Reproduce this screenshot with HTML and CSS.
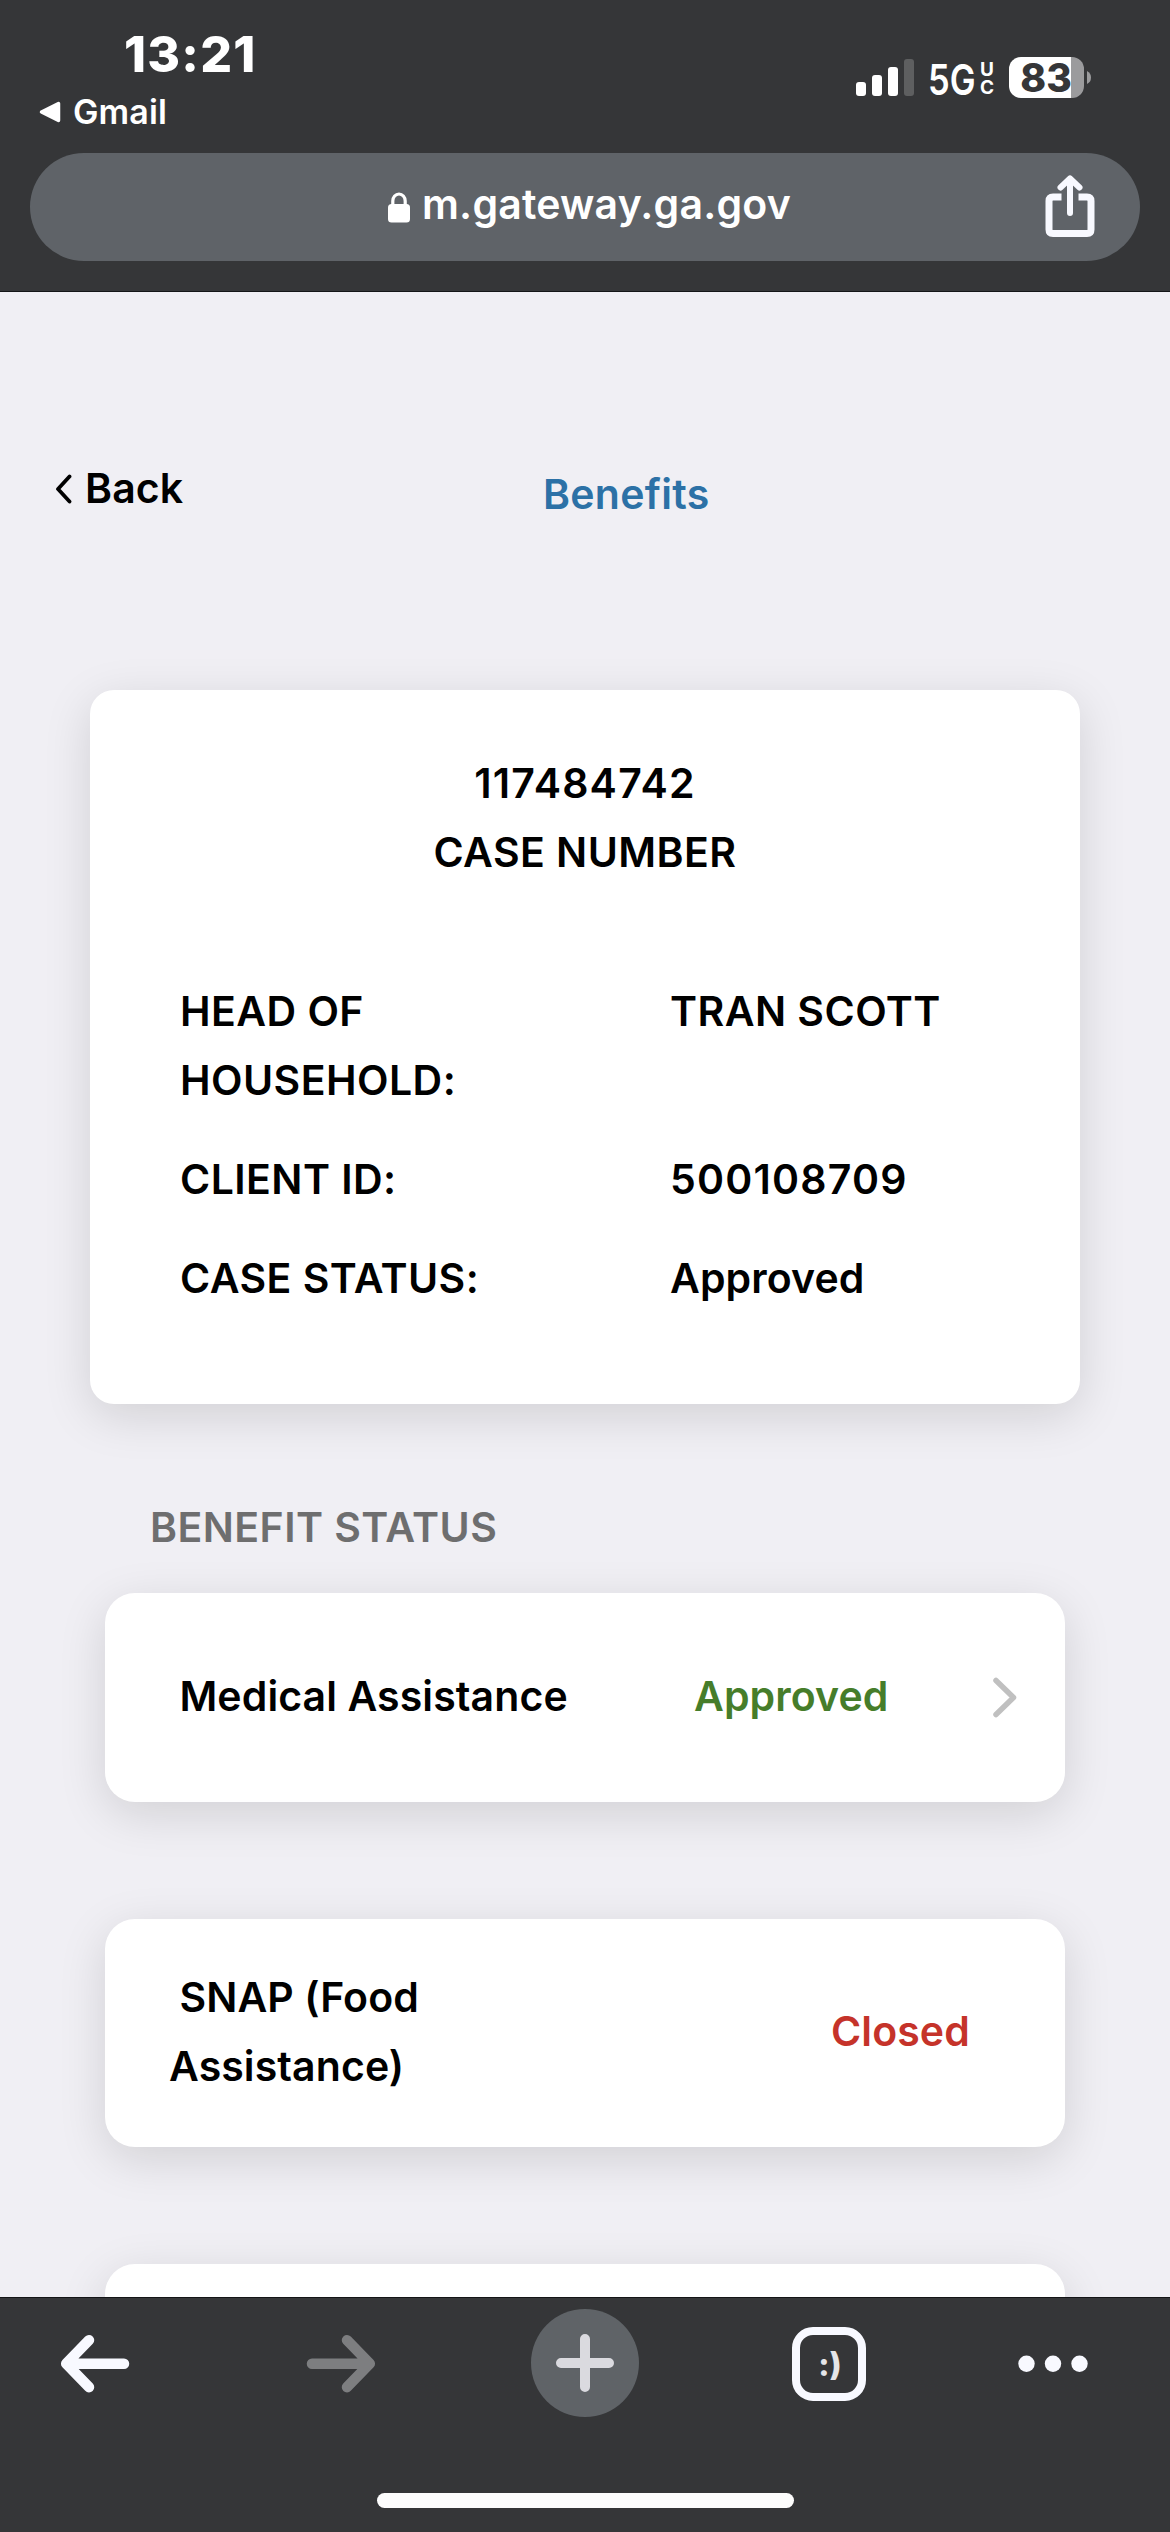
FILE: index.html
```html
<!DOCTYPE html>
<html lang="en">
<head>
<meta charset="UTF-8">
<title>Benefits</title>
<link rel="stylesheet" href="styles.css">
</head>
<body>

<header class="top">
  <div class="status">
    <div class="status-left">
      <div class="time">13:21</div>
      <div class="return">
        <svg width="22" height="22" viewBox="0 0 22 22"><path d="M2.5 11 19.5 2.5V19.500Z" fill="#fff" stroke="#fff" stroke-width="3.500" stroke-linejoin="round"/></svg>
        <span>Gmail</span>
      </div>
    </div>
    <div class="status-right">
      <svg class="signal" width="58" height="38" viewBox="0 0 58 38" fill="#fff">
        <rect x="0" y="23" width="10" height="14" rx="3"/>
        <rect x="16" y="16" width="10" height="21" rx="3"/>
        <rect x="32" y="8" width="10" height="29" rx="3"/>
        <rect x="48" y="0" width="10" height="37" rx="3" fill="#5e5f60"/>
      </svg>
      <span class="net"><span>5G</span></span>
      <span class="uc"><span>U</span><span>C</span></span>
      <span class="battery">83</span>
      <svg class="battery-cap" width="4" height="13" viewBox="0 0 4 13"><path d="M0 0Q4 2 4 6.500T0 13Z" fill="#9b9b9d"/></svg>
    </div>
  </div>
  <div class="address">
    <svg class="lock" width="22" height="31" viewBox="0 0 22 31"><rect x="0" y="12" width="22" height="18.500" rx="3.500" fill="#fff"/><path d="M4.800 14V9a6.200 7 0 0 1 12.400 0v5" fill="none" stroke="#fff" stroke-width="3.200"/></svg>
    <span class="url">m.gateway.ga.gov</span>
    <svg class="share" width="50" height="64" viewBox="0 0 50 64" fill="none" stroke="#f8f9ff" stroke-width="7">
      <path d="M16.500 22H8Q4 22 4 26V54.500Q4 58.500 8 58.500H42Q46 58.500 46 54.500V26Q46 22 42 22H33.500"/>
      <path d="M25 38V4M15.500 12.500 25 3.500l9.500 9" stroke-width="6" stroke-linecap="round" stroke-linejoin="round"/>
    </svg>
  </div>
</header>

<main class="page">
  <nav class="nav">
    <a class="back">
      <svg width="17" height="30" viewBox="0 0 17 30"><path d="M14.500 2.500 3 15l11.500 12.500" fill="none" stroke="#000" stroke-width="3.800" stroke-linecap="round" stroke-linejoin="round"/></svg>
      <span>Back</span>
    </a>
    <h1 class="title">Benefits</h1>
  </nav>

  <section class="case">
    <div class="case-head">
      <div class="num">117484742</div>
      <div class="caps">CASE NUMBER</div>
    </div>
    <div class="case-info">
      <div class="label caps">HEAD OF HOUSEHOLD:</div><div class="caps">TRAN SCOTT</div>
      <div class="label caps">CLIENT ID:</div><div class="num">500108709</div>
      <div class="label caps">CASE STATUS:</div><div>Approved</div>
    </div>
  </section>

  <h2 class="section-title caps">BENEFIT STATUS</h2>

  <section class="benefit medical">
    <div class="program">&nbsp;Medical Assistance</div>
    <div class="state approved">Approved</div>
    <svg class="arrow" width="24" height="41" viewBox="0 0 24 41"><path d="M3 3.500 20.500 20.500 3 37.500" fill="none" stroke="#c0c0c0" stroke-width="5.500" stroke-linecap="round" stroke-linejoin="round"/></svg>
  </section>

  <section class="benefit snap">
    <div class="program">&nbsp;SNAP (Food Assistance)</div>
    <div class="state closed">Closed</div>
  </section>

  <section class="benefit"></section>
</main>

<footer class="toolbar">
  <div class="buttons">
    <svg width="108" height="108" viewBox="0 0 108 108" fill="none" stroke="#f8f9ff" stroke-width="10.500" stroke-linecap="round" stroke-linejoin="round"><path d="M83 54.700H28M48 31.200 25.200 54.700 48 78.200"/></svg>
    <svg width="108" height="108" viewBox="0 0 108 108" fill="none" stroke="#7d7e80" stroke-width="10.500" stroke-linecap="round" stroke-linejoin="round"><path d="M26 54.700H81M61 31.200 83.800 54.700 61 78.200"/></svg>
    <svg width="108" height="108" viewBox="0 0 108 108"><circle cx="54" cy="54" r="54" fill="#5f6367"/><path d="M30 54H78M54 30V78" stroke="#dadadf" stroke-width="10" stroke-linecap="round"/></svg>
    <div class="tabs"><span>:)</span></div>
    <svg class="more" width="72" height="108" viewBox="0 0 72 108" fill="#f8f9ff"><circle cx="9.500" cy="54.700" r="8.200"/><circle cx="36" cy="54.700" r="8.200"/><circle cx="62.500" cy="54.700" r="8.200"/></svg>
  </div>
  <div class="home"></div>
</footer>

</body>
</html>
```
FILE: styles.css
```css
* { box-sizing:border-box; }
body { margin:0; width:1170px; height:2532px; display:flex; flex-direction:column; overflow:hidden; background:#f0eff4; color:#000; font-family:Inter, "Liberation Sans", sans-serif; font-size:41px; font-weight:570; line-height:69px; letter-spacing:0.1px; }
svg { display:block; flex:none; }
h1, h2 { margin:0; font-size:inherit; font-weight:inherit; }
.caps { letter-spacing:0.45px; }
.num { letter-spacing:1.2px; }

.top { height:292px; flex:none; background:#353638; border-bottom:1px solid #141517; color:#fff; }
.status { height:153px; display:flex; justify-content:space-between; }
.status-left { padding:24px 0 0 39px; }
.time { padding-left:85px; font-size:50px; font-weight:800; line-height:60px; letter-spacing:1.2px; }
.return { display:flex; align-items:center; gap:12px; margin-top:7px; font-size:34px; font-weight:600; line-height:41px; }
.status-right { display:flex; align-items:flex-start; padding:57px 79px 0 0; }
.signal { margin-top:2px; }
.net { width:50px; margin-left:14px; font-size:42px; font-weight:600; line-height:46px; letter-spacing:0; white-space:nowrap; }
.net span { display:inline-block; transform:scaleX(0.82); transform-origin:0 0; }
.uc { width:18px; margin:4px 0 0 2px; display:flex; flex-direction:column; font-size:19px; font-weight:700; line-height:18px; }
.battery { width:75px; height:41px; margin-left:11px; padding-right:1px; border-radius:12px; background:linear-gradient(90deg, #fff 62px, #9b9b9d 62px); color:#353638; font-size:39px; font-weight:800; line-height:42px; text-align:center; }
.battery-cap { margin:14px 0 0 3px; }

.address { height:108px; margin:0 30px; display:flex; align-items:center; border-radius:54px; background:#5f6368; }
.lock { margin-left:358px; }
.url { width:380px; margin-left:12px; padding-bottom:5px; white-space:nowrap; letter-spacing:0.2px; }
.share { margin-left:auto; margin-right:45px; }

.page { flex:1; min-height:0; overflow:hidden; }
.nav { height:398px; padding:162px 0 0 55px; display:flex; }
.back { height:69px; width:488px; display:flex; align-items:center; gap:13px; }
.title { margin-top:6px; color:#2c71a6; letter-spacing:0.3px; }

.case { width:990px; height:714px; margin:0 auto; padding:59px 90px 0; border-radius:24px; background:#fff; box-shadow:0 12px 48px rgba(0,0,0,0.13); }
.case-head { text-align:center; }
.case-info { display:grid; grid-template-columns:490px 1fr; row-gap:30px; margin-top:90px; }
.label { width:300px; }

.section-title { margin:89px 0 31px 150px; color:#6e6e6f; }
.benefit { width:960px; height:209px; margin:0 auto 117px; display:flex; align-items:center; border-radius:30px; background:#fff; box-shadow:0 12px 48px rgba(0,0,0,0.13); }
.program { padding:0 0 2px 64px; }
.state { padding-bottom:3px; }
.medical .program { width:589px; }
.approved { color:#467d2a; }
.arrow { margin-left:auto; margin-right:48px; }
.snap { height:228px; }
.snap .program { width:400px; }
.snap .state { margin-left:326px; }
.closed { color:#c5332a; }

.toolbar { height:235px; flex:none; background:#353638; border-top:1px solid #141517; }
.buttons { height:108px; margin:11px 0 0 41px; display:flex; gap:137px; }
.tabs { width:74px; height:74px; margin:18px 18px 0 16px; padding:1px 0 0 2px; display:flex; align-items:center; justify-content:center; border:8px solid #f8f9ff; border-radius:21px; color:#e5e5e8; font-size:32px; font-weight:800; line-height:36px; }
.more { margin-left:-4px; }
.home { width:417px; height:15px; margin:76px auto 0; border-radius:8px; background:#fdfdfd; }
```
